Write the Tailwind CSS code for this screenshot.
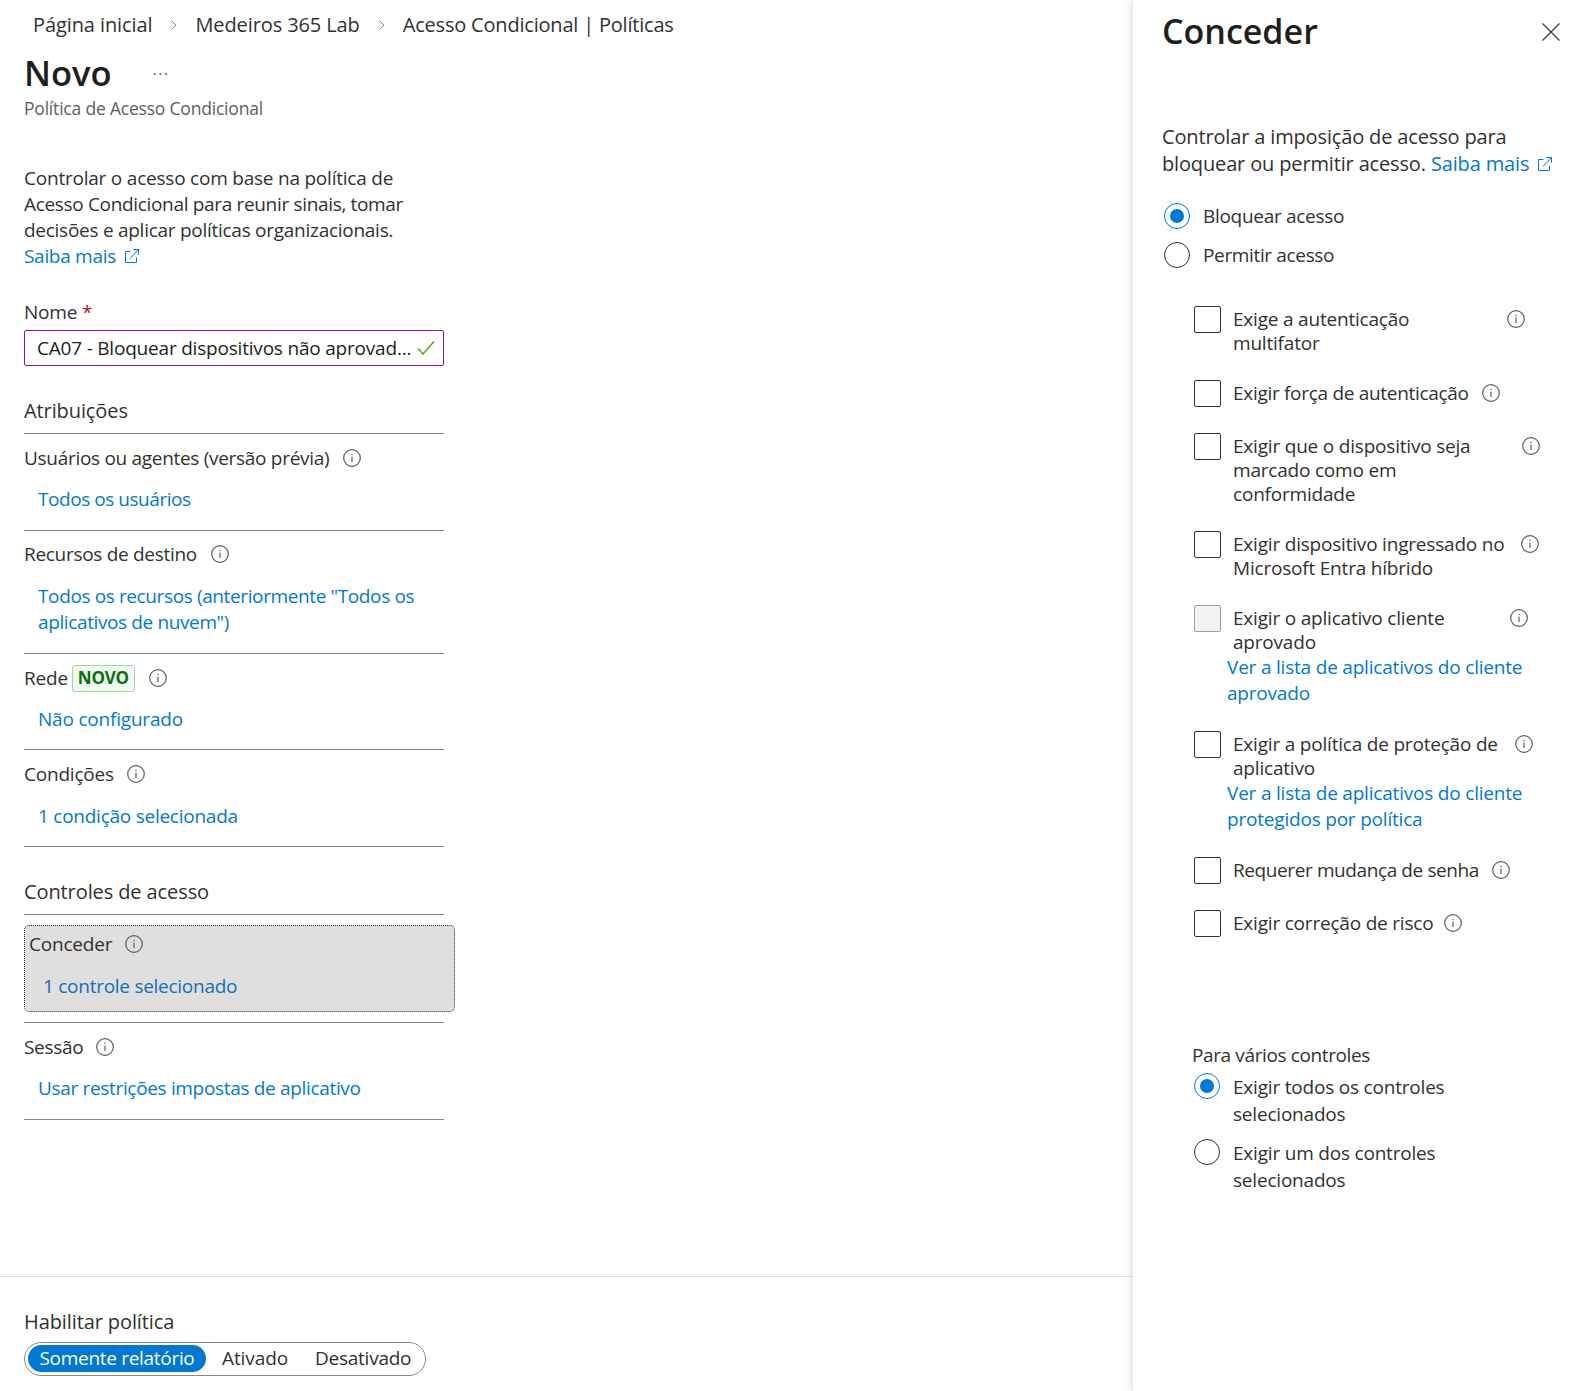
<!DOCTYPE html>
<html lang="pt-BR">
<head>
  <meta charset="UTF-8">
  <meta name="viewport" content="width=device-width, initial-scale=1.0">
  <title>Novo - Política de Acesso Condicional</title>
  <script src="https://cdn.jsdelivr.net/npm/@tailwindcss/browser@4"></script>
</head>
<body class="bg-white">
  <svg class="hidden">
    <symbol id="info" viewBox="0 0 18 18">
      <circle cx="9" cy="9" r="8.3" fill="none" stroke="#605e5c" stroke-width="1.2"/>
      <rect x="8.4" y="7.6" width="1.2" height="5.4" fill="#605e5c"/>
      <rect x="8.4" y="4.8" width="1.2" height="1.4" fill="#605e5c"/>
    </symbol>
    <symbol id="external" viewBox="0 0 16 16">
      <path d="M6.5 3.5H1.5V14.5H12.5V9.5" fill="none" stroke="currentColor" stroke-width="1"/>
      <path d="M6 10.5L14.5 1.5M9.5 1.5H14.5V6.5" fill="none" stroke="currentColor" stroke-width="1"/>
    </symbol>
  </svg>

  <div class="flex w-[1574px] h-[1391px] overflow-hidden font-['Open_Sans','Noto_Sans',sans-serif] text-[19px] text-[#323130] tracking-[-0.2px]">
    <!-- Left side -->
    <main class="w-[1133px] h-[1391px] flex flex-col shrink-0">
      <nav class="flex items-center h-[50px] pl-[33px] text-[20px] tracking-[-0.1px]">
        <span>Página inicial</span>
        <svg class="w-[8px] h-[12px] ml-[18px] mr-[17px]" viewBox="0 0 8 12"><path d="M1.5 1.5L6 6L1.5 10.5" fill="none" stroke="#8a8886" stroke-width="1"/></svg>
        <span>Medeiros 365 Lab</span>
        <svg class="w-[8px] h-[12px] ml-[18px] mr-[17px]" viewBox="0 0 8 12"><path d="M1.5 1.5L6 6L1.5 10.5" fill="none" stroke="#8a8886" stroke-width="1"/></svg>
        <span class="tracking-[-0.2px]">Acesso Condicional | Políticas</span>
      </nav>

      <div class="ml-[24px] w-[420px]">
        <div class="flex items-center h-[48px] pb-[2px]">
          <h1 class="text-[34.5px] font-semibold text-[#201f1e] leading-[46px] tracking-[0px]">Novo</h1>
          <span class="ml-[41px] mt-[2px] text-[#605e5c] text-[16px] tracking-[1.5px] leading-none">···</span>
        </div>
        <p class="text-[17.5px] leading-[24px] mt-[-2px] text-[#605e5c]">Política de Acesso Condicional</p>

        <p class="mt-[45px] leading-[26px]">
          <span class="tracking-[-0.22px]">Controlar o acesso com base na política de</span><br>
          <span class="tracking-[-0.33px]">Acesso Condicional para reunir sinais, tomar</span><br>
          <span class="tracking-[-0.27px]">decisões e aplicar políticas organizacionais.</span><br>
          <a class="text-[#0078d4] inline-flex items-center gap-[8px] tracking-[-0.3px]">Saiba mais <svg class="w-[16px] h-[16px]"><use href="#external"/></svg></a>
        </p>

        <label class="block mt-[30px] leading-[26px]">Nome <span class="text-[#a4262c]">*</span></label>
        <div class="mt-[5px] h-[36px] border border-[#881798] rounded-[2px] flex items-center pl-[12px] pr-[8px] justify-between">
          <span class="text-[#201f1e] whitespace-nowrap tracking-[-0.2px]">CA07 - Bloquear dispositivos não aprovad...</span>
          <svg class="w-[18px] h-[16px] shrink-0" viewBox="0 0 18 16"><path d="M1 8.5L6 14L17 1.5" fill="none" stroke="#57a300" stroke-width="1.4"/></svg>
        </div>

        <h2 class="mt-[31px] leading-[28px] text-[20px] tracking-[-0.1px]">Atribuições</h2>
        <div class="mt-[8px] border-b border-[#8a8886]"></div>

        <section class="border-b border-[#8a8886] pt-[10px] pb-[18px]">
          <div class="flex items-center h-[28px] tracking-[-0.3px]">Usuários ou agentes (versão prévia)<svg class="w-[18px] h-[18px] ml-[14px]"><use href="#info"/></svg></div>
          <a class="block mt-[14px] pl-[14px] leading-[26px] text-[#0078d4] tracking-[-0.45px]">Todos os usuários</a>
        </section>
        <section class="border-b border-[#8a8886] pt-[10px] pb-[18px]">
          <div class="flex items-center h-[26px] tracking-[-0.3px]">Recursos de destino<svg class="w-[18px] h-[18px] ml-[14px]"><use href="#info"/></svg></div>
          <a class="block mt-[16px] pl-[14px] leading-[26px] text-[#0078d4] tracking-[-0.38px]">Todos os recursos (anteriormente "Todos os<br>aplicativos de nuvem")</a>
        </section>
        <section class="border-b border-[#8a8886] pt-[10px] pb-[17px]">
          <div class="flex items-center h-[28px]">Rede
            <span class="ml-[4px] w-[63px] h-[27px] flex items-center justify-center rounded-[3px] border border-[#9fd89f] bg-[#f1faf1] text-[#0e700e] text-[17px] font-bold">NOVO</span>
            <svg class="w-[18px] h-[18px] ml-[14px]"><use href="#info"/></svg>
          </div>
          <a class="block mt-[14px] pl-[14px] leading-[26px] text-[#0078d4]">Não configurado</a>
        </section>
        <section class="border-b border-[#8a8886] pt-[10px] pb-[17px]">
          <div class="flex items-center h-[28px]">Condições<svg class="w-[18px] h-[18px] ml-[13px]"><use href="#info"/></svg></div>
          <a class="block mt-[15px] pl-[14px] leading-[26px] text-[#0078d4] tracking-[-0.25px]">1 condição selecionada</a>
        </section>

        <h2 class="mt-[31px] leading-[28px] text-[20px] tracking-[-0.1px]">Controles de acesso</h2>
        <div class="mt-[8px] border-b border-[#8a8886]"></div>

        <section class="mt-[10px] w-[431px] h-[87px] rounded-[5px] border border-dotted border-[#323130] bg-[#e1dfdd] pl-[4px] pt-[4px]">
          <div class="flex items-center h-[28px]">Conceder<svg class="w-[18px] h-[18px] ml-[13px]"><use href="#info"/></svg></div>
          <a class="block mt-[15px] pl-[14px] leading-[26px] text-[#106ebe] tracking-[-0.27px]">1 controle selecionado</a>
        </section>

        <div class="mt-[10px] border-b border-[#8a8886]"></div>
        <section class="border-b border-[#8a8886] pt-[10px] pb-[18px]">
          <div class="flex items-center h-[28px] tracking-[-0.3px]">Sessão<svg class="w-[18px] h-[18px] ml-[13px]"><use href="#info"/></svg></div>
          <a class="block mt-[14px] pl-[14px] leading-[26px] text-[#0078d4] tracking-[-0.33px]">Usar restrições impostas de aplicativo</a>
        </section>
      </div>

      <footer class="mt-auto h-[115px] border-t border-[#e1dfdd] pl-[24px] pt-[31px]">
        <div class="leading-[28px] text-[20px] tracking-[-0.1px]">Habilitar política</div>
        <div class="mt-[6px] w-[402px] h-[34px] rounded-full border border-[#8a8886] flex items-center pl-[3px] tracking-[-0.1px] pb-[1px]">
          <span class="w-[178px] h-[27px] rounded-full bg-[#0078d4] text-white flex items-center justify-center tracking-[-0.3px]">Somente relatório</span>
          <span class="ml-[16px]">Ativado</span>
          <span class="ml-[27px] tracking-[-0.25px]">Desativado</span>
        </div>
      </footer>
    </main>

    <!-- Right panel -->
    <aside class="w-[441px] h-[1391px] shrink-0 shadow-[-3px_0_6px_rgba(0,0,0,0.1)] pl-[29px]">
      <div class="flex items-center justify-between h-[64px] pb-[2px] pr-[14px]">
        <h2 class="text-[34px] font-semibold text-[#201f1e] tracking-[0px]">Conceder</h2>
        <svg class="w-[18px] h-[18px] mt-[2px]" viewBox="0 0 18 18"><path d="M0.5 0.5L17.5 17.5M17.5 0.5L0.5 17.5" stroke="#323130" stroke-width="1.1" fill="none"/></svg>
      </div>

      <p class="mt-[59px] leading-[27px] whitespace-nowrap text-[20px] tracking-[-0.15px]">
        Controlar a imposição de acesso para<br>
        bloquear ou permitir acesso. <a class="text-[#0078d4] inline-flex items-center gap-[8px]">Saiba mais <svg class="w-[16px] h-[16px]"><use href="#external"/></svg></a>
      </p>

      <div class="mt-[26px] ml-[2px] flex items-center h-[26px]">
        <span class="w-[26px] h-[26px] rounded-full border border-[#0078d4] flex items-center justify-center"><span class="w-[14px] h-[14px] rounded-full bg-[#0078d4]"></span></span>
        <span class="ml-[13px] tracking-[-0.3px]">Bloquear acesso</span>
      </div>
      <div class="mt-[13px] ml-[2px] flex items-center h-[26px]">
        <span class="w-[26px] h-[26px] rounded-full border border-[#323130]"></span>
        <span class="ml-[13px] tracking-[-0.35px]">Permitir acesso</span>
      </div>

      <div class="mt-[38px] pl-[32px] flex flex-col gap-[24px] leading-[24px]">
        <div>
          <div class="flex items-start">
            <span class="w-[27px] h-[27px] shrink-0 rounded-[2px] border border-[#323130]"></span>
            <span class="ml-[12px] w-[274px] pt-[1px]">Exige a autenticação<br>multifator</span>
            <svg class="w-[18px] h-[18px] mt-[4px]"><use href="#info"/></svg>
          </div>
        </div>
        <div class="h-[29px] mt-[1px]">
          <div class="flex items-start">
            <span class="w-[27px] h-[27px] shrink-0 rounded-[2px] border border-[#323130]"></span>
            <span class="ml-[12px] w-[249px] pt-[1px] tracking-[-0.3px]">Exigir força de autenticação</span>
            <svg class="w-[18px] h-[18px] mt-[4px]"><use href="#info"/></svg>
          </div>
        </div>
        <div>
          <div class="flex items-start">
            <span class="w-[27px] h-[27px] shrink-0 rounded-[2px] border border-[#323130]"></span>
            <span class="ml-[12px] w-[289px] pt-[1px]">Exigir que o dispositivo seja<br>marcado como em<br>conformidade</span>
            <svg class="w-[18px] h-[18px] mt-[4px]"><use href="#info"/></svg>
          </div>
        </div>
        <div class="mt-[1px]">
          <div class="flex items-start">
            <span class="w-[27px] h-[27px] shrink-0 rounded-[2px] border border-[#323130]"></span>
            <span class="ml-[12px] w-[288px] pt-[1px] whitespace-nowrap">Exigir dispositivo ingressado no<br>Microsoft Entra híbrido</span>
            <svg class="w-[18px] h-[18px] mt-[4px]"><use href="#info"/></svg>
          </div>
        </div>
        <div class="mt-[1px]">
          <div class="flex items-start">
            <span class="w-[27px] h-[27px] shrink-0 rounded-[2px] border border-[#a19f9d] bg-[#f3f2f1]"></span>
            <span class="ml-[12px] w-[277px] pt-[1px]">Exigir o aplicativo cliente<br>aprovado</span>
            <svg class="w-[18px] h-[18px] mt-[4px]"><use href="#info"/></svg>
          </div>
          <a class="block ml-[33px] leading-[26px] text-[#0078d4]">Ver a lista de aplicativos do cliente<br>aprovado</a>
        </div>
        <div class="mt-[1px]">
          <div class="flex items-start">
            <span class="w-[27px] h-[27px] shrink-0 rounded-[2px] border border-[#323130]"></span>
            <span class="ml-[12px] w-[282px] pt-[1px]">Exigir a política de proteção de<br>aplicativo</span>
            <svg class="w-[18px] h-[18px] mt-[4px]"><use href="#info"/></svg>
          </div>
          <a class="block ml-[33px] leading-[26px] text-[#0078d4]">Ver a lista de aplicativos do cliente<br>protegidos por política</a>
        </div>
        <div class="h-[29px] mt-[1px]">
          <div class="flex items-start">
            <span class="w-[27px] h-[27px] shrink-0 rounded-[2px] border border-[#323130]"></span>
            <span class="ml-[12px] w-[259px] pt-[1px] tracking-[-0.4px]">Requerer mudança de senha</span>
            <svg class="w-[18px] h-[18px] mt-[4px]"><use href="#info"/></svg>
          </div>
        </div>
        <div>
          <div class="flex items-start">
            <span class="w-[27px] h-[27px] shrink-0 rounded-[2px] border border-[#323130]"></span>
            <span class="ml-[12px] w-[211px] pt-[1px]">Exigir correção de risco</span>
            <svg class="w-[18px] h-[18px] mt-[4px]"><use href="#info"/></svg>
          </div>
        </div>
      </div>

      <div class="mt-[105px] pl-[31px]">
        <div class="leading-[26px] tracking-[-0.38px] ml-[-1px]">Para vários controles</div>
        <div class="mt-[5px] ml-[1px] flex items-start">
          <span class="w-[26px] h-[26px] shrink-0 rounded-full border border-[#0078d4] flex items-center justify-center"><span class="w-[14px] h-[14px] rounded-full bg-[#0078d4]"></span></span>
          <span class="ml-[13px] pt-[1px] leading-[27px]">Exigir todos os controles<br>selecionados</span>
        </div>
        <div class="mt-[11px] ml-[1px] flex items-start">
          <span class="w-[26px] h-[26px] shrink-0 rounded-full border border-[#323130]"></span>
          <span class="ml-[13px] pt-[1px] leading-[27px]">Exigir um dos controles<br>selecionados</span>
        </div>
      </div>
    </aside>
  </div>
</body>
</html>
